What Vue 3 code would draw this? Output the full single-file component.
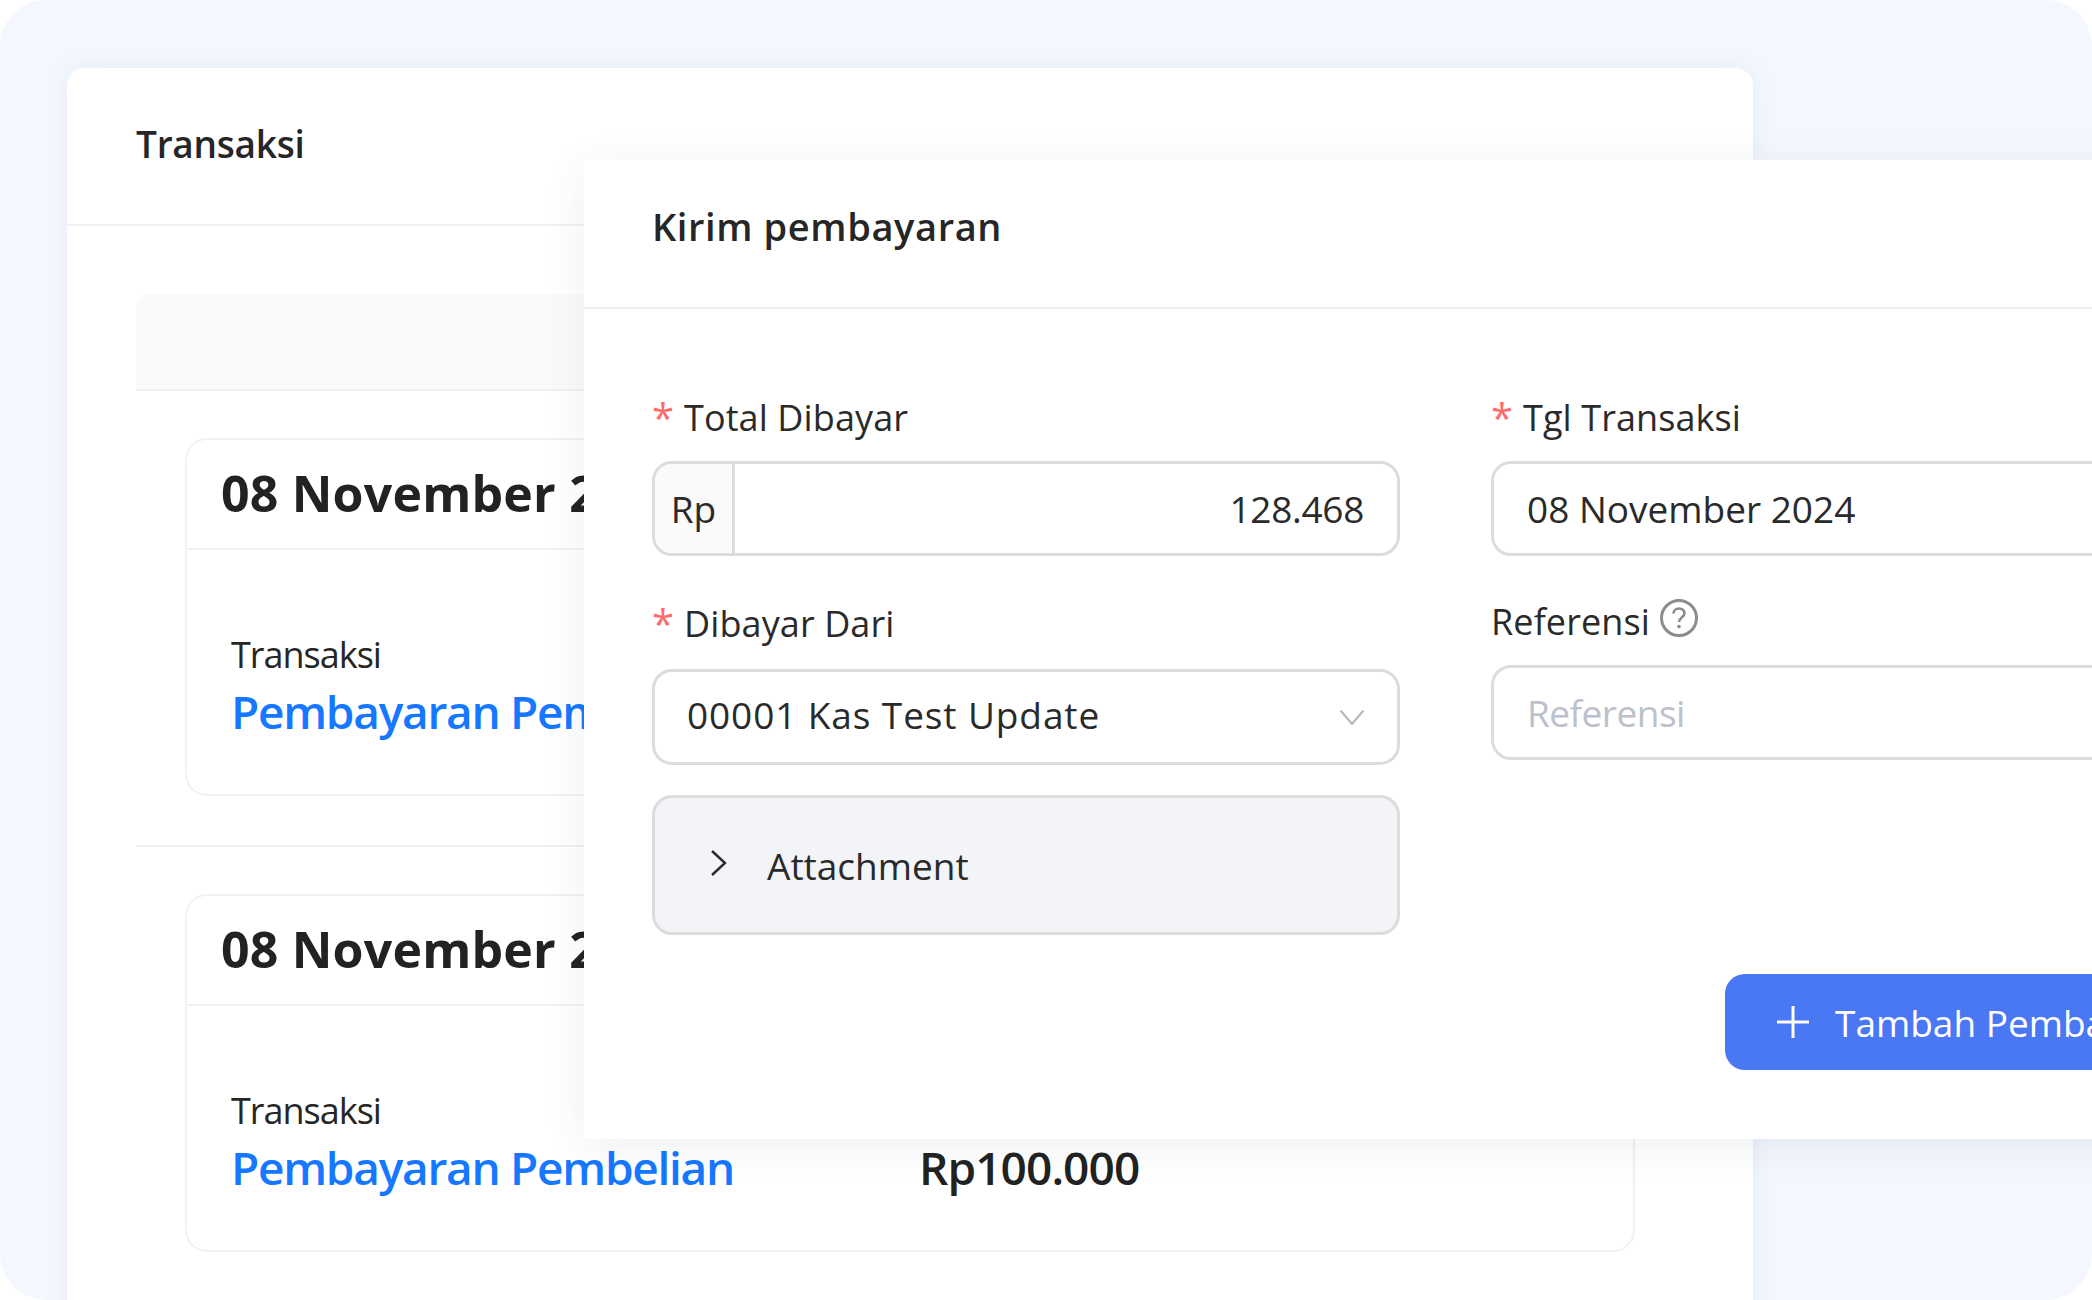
<script setup>
const rows = [
  { date: '08 November 2024', type: 'Transaksi', link: 'Pembayaran Pembelian', amount: '' },
  { date: '08 November 2024', type: 'Transaksi', link: 'Pembayaran Pembelian', amount: 'Rp100.000' }
]
</script>

<template>
  <div class="shell">
    <section class="card">
      <header class="card-head">Transaksi</header>
      <div class="card-body">
        <div class="table-head"></div>
        <div v-for="(row, i) in rows" :key="i" class="row-wrap" :class="{ last: i === rows.length - 1 }">
          <article class="row-card">
            <div class="row-date">{{ row.date }}</div>
            <div class="row-main">
              <div class="row-left">
                <div class="row-type">{{ row.type }}</div>
                <a class="row-link">{{ row.link }}</a>
              </div>
              <div v-if="row.amount" class="row-amount">{{ row.amount }}</div>
            </div>
          </article>
        </div>
      </div>
    </section>

    <section class="modal">
      <header class="modal-head">Kirim pembayaran</header>
      <div class="modal-body">
        <div class="col col-left">
          <label class="label"><span class="req">*</span>Total Dibayar</label>
          <div class="input group">
            <span class="addon">Rp</span>
            <span class="amount">128.468</span>
          </div>
          <label class="label second"><span class="req">*</span>Dibayar Dari</label>
          <div class="input select">
            <span class="select-value">00001 Kas Test Update</span>
            <svg class="chev-down" width="26" height="24" viewBox="0 0 26 24" fill="none">
              <path d="M1.5 5.5 13 19 24.5 5.5" stroke="#b4b6ba" stroke-width="2" />
            </svg>
          </div>
          <div class="attachment">
            <svg class="chev-right" width="22" height="28" viewBox="0 0 22 28" fill="none">
              <path d="M5 2 18 14 5 26" stroke="#2a2a2a" stroke-width="2.4" />
            </svg>
            <span>Attachment</span>
          </div>
        </div>
        <div class="col col-right">
          <label class="label"><span class="req">*</span>Tgl Transaksi</label>
          <div class="input plain">08 November 2024</div>
          <label class="label second ref">
            Referensi
            <svg class="help" width="40" height="40" viewBox="0 0 40 40" fill="none">
              <circle cx="20" cy="20" r="17.5" stroke="#8c8c8c" stroke-width="3" />
              <path d="M14.5 15.5c0-3 2.4-5 5.5-5s5.5 2 5.5 4.8c0 4.4-5.5 4.2-5.5 8.7" stroke="#8c8c8c" stroke-width="2.6" />
              <circle cx="20" cy="28.6" r="1.8" fill="#8c8c8c" />
            </svg>
          </label>
          <div class="input plain placeholder">Referensi</div>
          <div class="actions">
            <button class="btn" type="button">
              <svg class="plus" width="36" height="36" viewBox="0 0 36 36" fill="none">
                <path d="M18 2v32M2 18h32" stroke="#fff" stroke-width="3" />
              </svg>
              <span>Tambah Pembayaran</span>
            </button>
          </div>
        </div>
      </div>
    </section>
  </div>
</template>

<style>
html, body { margin: 0; background: #fff; }
</style>

<style scoped>
.shell {
  position: relative;
  width: 2092px;
  height: 1300px;
  box-sizing: border-box;
  padding: 68px 0 0 67px;
  background: #f4f8fe;
  border-radius: 46px;
  overflow: hidden;
  font-family: "Open Sans", "Noto Sans", sans-serif;
  color: #262626;
}
.card {
  width: 1686px;
  height: 1300px;
  background: #fff;
  border-radius: 18px;
  box-shadow: 0 0 24px rgba(40, 60, 100, 0.07);
}
.card-head {
  height: 158px;
  box-sizing: border-box;
  padding: 0 69px 5px;
  display: flex;
  align-items: center;
  font-size: 37px;
  font-weight: 600;
  letter-spacing: -0.25px;
  border-bottom: 2px solid #f1f1f2;
}
.card-body { padding: 68px 69px 0; }
.table-head {
  height: 95px;
  background: #fafafa;
  border-radius: 14px 14px 0 0;
  border-bottom: 2px solid #f0f0f0;
}
.row-wrap {
  padding: 47px 49px 49px 49px;
  border-bottom: 2px solid #f0f0f0;
}
.row-wrap.last { border-bottom: none; }
.row-card {
  height: 358px;
  box-sizing: border-box;
  border: 2px solid #f1f1f2;
  border-radius: 22px;
  background: #fff;
}
.row-date {
  height: 110px;
  box-sizing: border-box;
  padding: 0 34px 2px;
  display: flex;
  align-items: center;
  font-size: 50px;
  font-weight: 700;
  letter-spacing: 0.2px;
  border-bottom: 2px solid #f1f1f2;
  white-space: nowrap;
  color: #222;
}
.row-main {
  display: flex;
  align-items: flex-start;
  padding: 81px 44px 0;
}
.row-left { width: 688px; display: flex; flex-direction: column; flex-shrink: 0; }
.row-type { font-size: 36px; line-height: 48px; letter-spacing: -1px; }
.row-link {
  font-size: 46px;
  line-height: 64px;
  font-weight: 600;
  letter-spacing: -1.27px;
  color: #1677ff;
}
.row-amount {
  margin-top: 48px;
  font-size: 46px;
  line-height: 64px;
  font-weight: 600;
  letter-spacing: -0.9px;
  color: #222;
}
.modal {
  position: absolute;
  left: 584px;
  top: 160px;
  width: 1560px;
  height: 979px;
  background: #fff;
  box-shadow: 0 8px 40px rgba(40, 60, 100, 0.08);
}
.modal-head {
  height: 149px;
  box-sizing: border-box;
  padding: 0 68px 16px;
  display: flex;
  align-items: center;
  font-size: 38px;
  font-weight: 600;
  letter-spacing: 0.6px;
  border-bottom: 2px solid #ededee;
}
.modal-body {
  display: grid;
  grid-template-columns: 748px 748px;
  column-gap: 91px;
  padding: 86px 0 0 68px;
}
.col { display: flex; flex-direction: column; }
.label {
  height: 44px;
  display: flex;
  align-items: center;
  font-size: 36px;
  margin-bottom: 22px;
  letter-spacing: 0.1px;
  color: #2a2a2a;
}
.label.second { margin-top: 45px; margin-bottom: 24px; }
.req {
  color: #ff6b6b;
  font-size: 40px;
  width: 32px;
}
.input {
  box-sizing: border-box;
  border: 3px solid #dcdcdd;
  border-radius: 20px;
  background: #fff;
  font-size: 37px;
  color: #2a2a2a;
}
.group { height: 95px; display: flex; overflow: hidden; }
.addon {
  width: 77px;
  background: #fafafa;
  border-right: 3px solid #dcdcdd;
  display: flex;
  align-items: center;
  justify-content: center;
}
.amount {
  flex: 1;
  display: flex;
  align-items: center;
  justify-content: flex-end;
  padding-right: 33px;
  letter-spacing: -0.3px;
}
.select {
  height: 96px;
  padding: 0 32px;
  display: flex;
  align-items: center;
  justify-content: space-between;
  letter-spacing: 0.9px;
}
.select-value { margin-top: -6px; }
.attachment {
  margin-top: 30px;
  height: 140px;
  box-sizing: border-box;
  border: 3px solid #dcdcdd;
  border-radius: 20px;
  background: #f3f4f8;
  padding-left: 52px;
  display: flex;
  align-items: center;
  gap: 38px;
  font-size: 37px;
  color: #2a2a2a;
}
.chev-right { margin-top: -4px; }
.plain {
  height: 95px;
  padding: 0 33px;
  display: flex;
  align-items: center;
}
.label.ref { gap: 9px; margin-top: 43px; margin-bottom: 22px; }
.help { margin-top: -6px; }
.placeholder { color: #bcc1cb; letter-spacing: -0.5px; }
.actions { padding: 214px 0 0 234px; }
.btn {
  height: 96px;
  width: 500px;
  border: none;
  border-radius: 20px;
  background: #4a77f3;
  color: #fff;
  font-family: inherit;
  font-size: 37px;
  display: flex;
  align-items: center;
  gap: 24px;
  padding: 0 50px;
  white-space: nowrap;
}
.plus { flex-shrink: 0; }
</style>
